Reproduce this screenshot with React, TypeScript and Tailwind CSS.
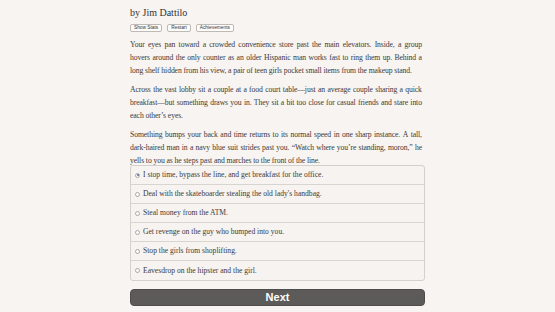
import React from "react";

const serif = { fontFamily: '"Liberation Serif", "Times New Roman", serif' };
const sans = { fontFamily: '"Liberation Sans", Arial, sans-serif' };

const choices = [
  "I stop time, bypass the line, and get breakfast for the office.",
  "Deal with the skateboarder stealing the old lady's handbag.",
  "Steal money from the ATM.",
  "Get revenge on the guy who bumped into you.",
  "Stop the girls from shoplifting.",
  "Eavesdrop on the hipster and the girl.",
];

const paras: string[][] = [
  [
    "Your eyes pan toward a crowded convenience store past the main elevators. Inside, a group",
    "hovers around the only counter as an older Hispanic man works fast to ring them up. Behind a",
    "long shelf hidden from his view, a pair of teen girls pocket small items from the makeup stand.",
  ],
  [
    "Across the vast lobby sit a couple at a food court table\u2014just an average couple sharing a quick",
    "breakfast\u2014but something draws you in. They sit a bit too close for casual friends and stare into",
    "each other\u2019s eyes.",
  ],
  [
    "Something bumps your back and time returns to its normal speed in one sharp instance. A tall,",
    "dark-haired man in a navy blue suit strides past you. \u201cWatch where you\u2019re standing, moron,\u201d he",
    "yells to you as he steps past and marches to the front of the line.",
  ],
];

export default function App() {
  return (
    <div className="w-[555px] h-[312px] bg-[#f7f4f1] flex justify-center overflow-hidden" style={serif}>
      <div className="w-[295px] flex flex-col">
        <div className="mt-[6px] text-[10px] leading-[14px] text-[#333]">by Jim Dattilo</div>
        <div className="mt-[4px] flex gap-[5px]">
          {["Show Stats", "Restart", "Achievements"].map((b) => (
            <div
              key={b}
              className="h-[8px] px-[3px] flex items-center border border-[#bdbab6] rounded-[2px] bg-[#fdfcfb] text-[4.8px] text-[#333]"
              style={sans}
            >
              {b}
            </div>
          ))}
        </div>
        <div className="mt-[6px] pr-[3px] text-[7.7px] leading-[13px] tracking-[-0.1px] text-[#3d3b39]">
          {paras.map((p, i) => (
            <div key={i} className={i < paras.length - 1 ? "mb-[6px]" : ""}>
              {p.map((l, j) =>
                j < p.length - 1 ? (
                  <div key={j} className="flex justify-between gap-[1.5px] whitespace-nowrap">
                    {l.split(" ").map((w, k) => (
                      <span key={k}>{w}</span>
                    ))}
                  </div>
                ) : (
                  <div key={j} className="whitespace-nowrap">
                    {l}
                  </div>
                )
              )}
            </div>
          ))}
        </div>
        <div className="mt-[-2px] border border-[#d4d0cc] rounded-[3px] bg-[#f6f3f0] flex flex-col">
          {choices.map((c, i) => (
            <div
              key={c}
              className={`h-[19px] flex items-center pl-[4px] text-[7.6px] text-[#3d3b39] ${i < choices.length - 1 ? "border-b border-[#d8d4d0]" : ""}`}
            >
              <span className="w-[5px] h-[5px] rounded-full border border-[#a9a6a3] bg-white flex items-center justify-center mr-[3px]">
                {i === 0 && <span className="w-[2px] h-[2px] rounded-full bg-[#4a6a9a]" />}
              </span>
              {c}
            </div>
          ))}
        </div>
        <div
          className="mt-[8px] h-[17px] rounded-[4px] bg-[#5c5b59] border border-[#4e4d4b] flex items-center justify-center text-white font-bold text-[11px]"
          style={sans}
        >
          Next
        </div>
      </div>
    </div>
  );
}
